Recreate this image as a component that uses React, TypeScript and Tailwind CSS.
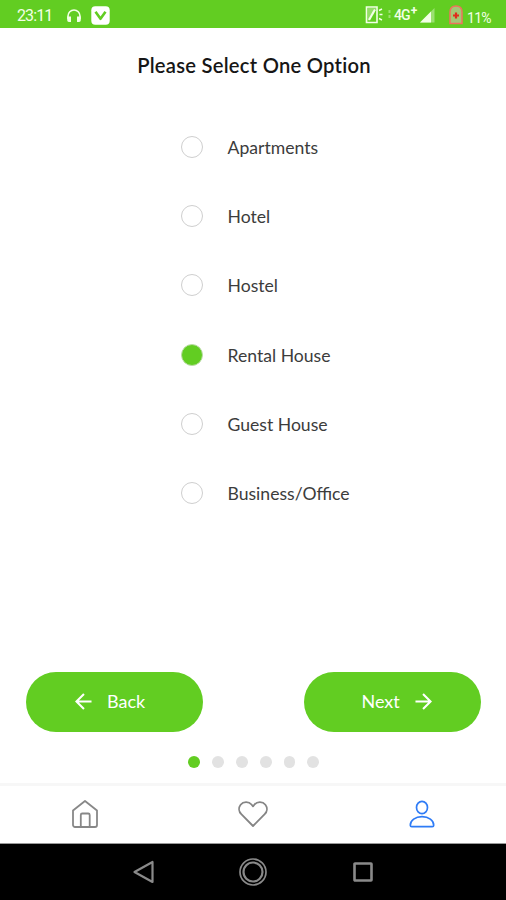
import { useState } from "react";

type IconProps = { className?: string };

const options = [
  "Apartments",
  "Hotel",
  "Hostel",
  "Rental House",
  "Guest House",
  "Business/Office",
];

function StatusBar() {
  return (
    <header className="flex h-7 items-center bg-[#62cd22] pl-[17px] pr-[15px] font-[Roboto,sans-serif] text-[#f2ffe6]">
      <span className="mt-[3px] w-[50px] whitespace-nowrap text-[16px] leading-none tracking-[-0.9px]">23:11</span>
      <svg className="mt-[3px] h-[14px] w-[14px]" viewBox="0 0 14 14" fill="none" stroke="currentColor" strokeWidth="1.6">
        <path d="M1 10V7a6 6 0 0 1 12 0v3" />
        <path d="M1 8.2h2.2v4H2a1 1 0 0 1-1-1zM13 8.2h-2.2v4H12a1 1 0 0 0 1-1z" fill="currentColor" />
      </svg>
      <svg className="ml-2.5 mt-0.5 h-[19px] w-[19px]" viewBox="0 0 19 19" fill="none">
        <rect x="0.3" y="0.3" width="18.4" height="18.4" rx="4" fill="#fff" />
        <path d="m4.5 5.8 5 7 5-7" stroke="#62cd22" strokeWidth="2.6" strokeLinejoin="round" />
      </svg>
      <div className="ml-auto flex items-center">
        <svg className="mt-0.5 h-[18px] w-[28px]" viewBox="0 0 28 18" fill="none" stroke="currentColor" strokeWidth="1.6">
          <path d="M2.5 1H13v15.500H2.500z" />
          <path d="M12.500 2 3.500 16V2z" fill="currentColor" stroke="none" opacity=".35" />
          <path d="m11 3.500-6 10.500" strokeWidth="2.2" />
          <path d="M15 4.500 18 3M15.500 8.500H18.500M15 12.500l3 1.500" strokeWidth="1.4" />
          <path d="M25.500 4v3M25.500 9v3" opacity=".4" strokeWidth="2" />
        </svg>
        <span className="ml-0.5 mt-0.5 flex w-[26px] whitespace-nowrap text-[14px] font-medium leading-none tracking-[-0.9px]">
          4G<span className="-mt-[3px] ml-px text-[12px] font-bold">+</span>
        </span>
        <svg className="mt-0.5 h-[15px] w-[15px]" viewBox="0 0 15 15" fill="currentColor">
          <path d="M0 14.500 14.500 0v14.500z" opacity=".4" />
          <path d="M0 14.500 11 3.500v11z" />
        </svg>
        <svg className="ml-3.5 mt-0.5 h-[20px] w-[14px]" viewBox="0 0 14 20" fill="none">
          <path d="M1 7c0-3.500 2-6 6-6s6 2.500 6 6v11.500H1z" fill="#a4c776" stroke="#ef735c" strokeWidth="1.5" />
          <path d="M7 7.500v6M4 10.500h6" stroke="#e02c1b" strokeWidth="2.2" />
        </svg>
        <span className="ml-1 mt-[7px] w-[24px] whitespace-nowrap text-[14px] leading-none tracking-[-0.7px]">11%</span>
      </div>
    </header>
  );
}

function ArrowLeft({ className }: IconProps) {
  return (
    <svg className={className} viewBox="0 0 18 18" fill="none" stroke="currentColor" strokeWidth="2.2">
      <path d="M17.5 9H2M9.5 1 1.5 9l8 8" />
    </svg>
  );
}

function HomeIcon() {
  return (
    <svg className="h-[28px] w-[26px]" viewBox="0 0 26 28" fill="none" stroke="#888" strokeWidth="1.8" strokeLinejoin="round">
      <path d="M1 10.5 13 1l12 9.5V25a2 2 0 0 1-2 2H3a2 2 0 0 1-2-2z" />
      <path d="M8.8 27V15a1.5 1.5 0 0 1 1.5-1.5h5.9a1.5 1.5 0 0 1 1.5 1.500v12" />
    </svg>
  );
}

function HeartIcon() {
  return (
    <svg className="h-[26px] w-[30px]" viewBox="0 0 30 26" fill="none" stroke="#858585" strokeWidth="1.8" strokeLinejoin="round">
      <path d="M15 25 3.3 13.2C.7 10.6.4 6.6 2.6 3.7 5.3.3 10.8.2 13.5 3.5L15 5.3l1.5-1.800C19.200.2 24.700.3 27.400 3.700c2.200 2.900 1.900 6.900-.7 9.500z" />
    </svg>
  );
}

function PersonIcon() {
  return (
    <svg className="h-[28px] w-[26px]" viewBox="0 0 26 28" fill="none" stroke="#2f7cf6" strokeWidth="1.7" strokeLinejoin="round">
      <ellipse cx="13" cy="7.5" rx="5.5" ry="6.2" />
      <path d="M1.3 25.2c0-4.7 5-8.5 11.7-8.5s11.7 3.8 11.7 8.5c0 .9-.6 1.4-1.5 1.4H2.8c-.9 0-1.5-.5-1.5-1.4z" />
    </svg>
  );
}

function App() {
  const [selected, setSelected] = useState("Rental House");

  return (
    <div className="flex h-[900px] w-[506px] flex-col overflow-hidden bg-white font-[Lato,sans-serif]">
      <StatusBar />

      <main className="flex h-[755px] flex-col">
        <h1 className="mt-[23px] pl-[2px] text-center text-[20.2px] font-semibold leading-[28px] tracking-[0.25px] text-[#161616]">
          Please Select One Option
        </h1>

        <div className="ml-[181px] mt-[33px] flex flex-col">
          {options.map((option) => (
            <button
              key={option}
              className="flex h-[69.3px] items-center text-left"
              onClick={() => setSelected(option)}
            >
              <span
                className={`size-[22px] rounded-full border ${
                  selected === option
                    ? "border-[#b9dba4] bg-[#62cd22]"
                    : "border-[#cfcfcf] bg-white"
                }`}
              />
              <span className="ml-[24.5px] mt-0.5 whitespace-nowrap text-[17.6px] leading-6 text-[#3c3c3c]">{option}</span>
            </button>
          ))}
        </div>

        <div className="mt-auto flex justify-between pl-[26px] pr-[25px] text-[18px] text-white">
          <button className="flex h-[60px] w-[177px] items-center rounded-full bg-[#62cd22] pb-0.5 pl-[48.5px]">
            <ArrowLeft className="size-[17px]" />
            <span className="ml-[15.5px]">Back</span>
          </button>
          <button className="flex h-[60px] w-[177px] items-center rounded-full bg-[#62cd22] pb-0.5 pl-[57.5px]">
            <span className="w-[53.5px] text-left">Next</span>
            <ArrowLeft className="size-[17px] rotate-180" />
          </button>
        </div>

        <div className="mb-[15px] mt-6 flex gap-3 pl-[188px]">
          {options.map((option, i) => (
            <span
              key={option}
              className={`size-[11.9px] rounded-full ${i === 0 ? "bg-[#62cd22]" : "bg-[#e2e2e2]"}`}
            />
          ))}
        </div>
      </main>

      <nav className="grid h-[61px] grid-cols-3 items-center justify-items-center border-b border-t-[3px] border-b-[#999] border-t-[#f7f7f7] bg-white pb-px pl-px">
        <HomeIcon />
        <HeartIcon />
        <PersonIcon />
      </nav>

      <footer className="flex h-14 items-center bg-black pl-[133px] text-[#8a8a8a]">
        <svg className="h-[24px] w-[21px]" viewBox="0 0 21 24" fill="none" stroke="currentColor" strokeWidth="2.2" strokeLinejoin="round">
          <path d="M19.5 2v20L1.5 12z" />
        </svg>
        <svg className="ml-[85px] size-[28px]" viewBox="0 0 28 28" fill="none" stroke="currentColor">
          <circle cx="14" cy="14" r="13" strokeWidth="1.7" />
          <circle cx="14" cy="14" r="9.5" strokeWidth="2.2" />
        </svg>
        <svg className="ml-[86px] size-[20px]" viewBox="0 0 20 20" fill="none" stroke="currentColor" strokeWidth="2.6">
          <rect x="1.5" y="1.5" width="17" height="17" rx="0.5" />
        </svg>
      </footer>
    </div>
  );
}

export default App;
